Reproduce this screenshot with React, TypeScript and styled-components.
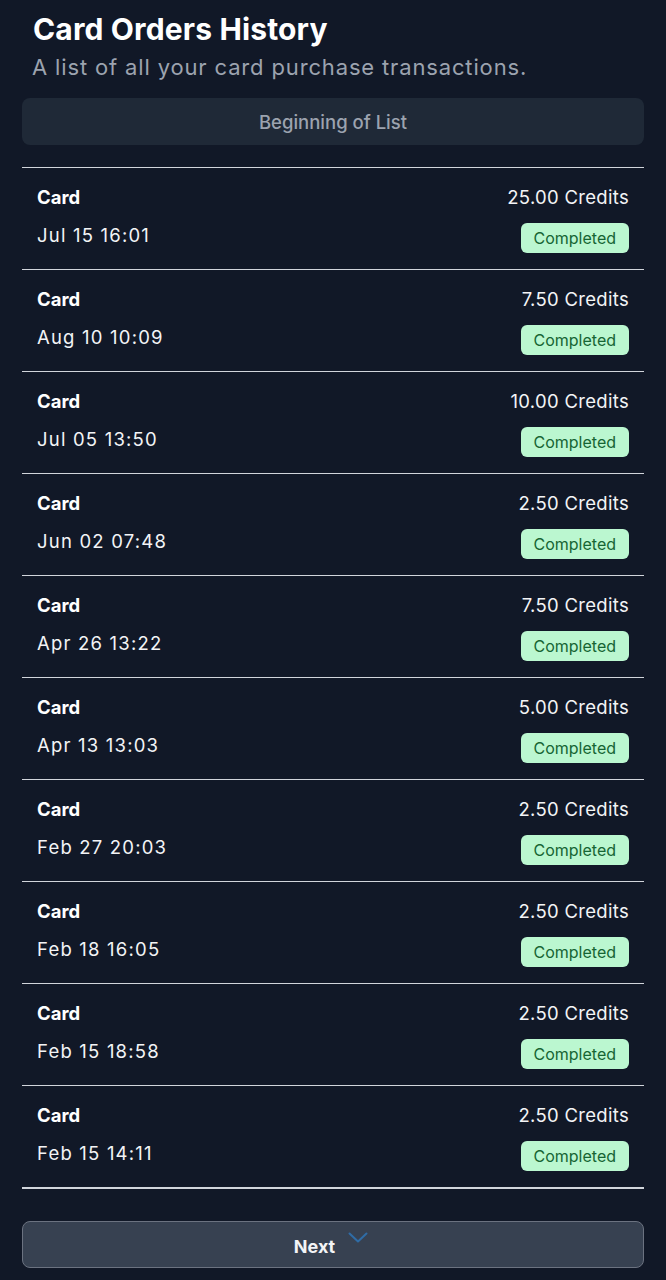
import React from 'react';
import styled, { createGlobalStyle } from 'styled-components';

const GlobalStyle = createGlobalStyle`
  html, body {
    margin: 0;
    padding: 0;
    background: #111827;
  }
  body {
    font-family: Inter, "Noto Sans", sans-serif;
    color: #f9fafb;
  }
`;

const Page = styled.div`
  display: flex;
  flex-direction: column;
  padding: 10px 22px 11px;
  min-height: 1280px;
  box-sizing: border-box;
  background: #111827;
`;

const Header = styled.div`
  display: flex;
  flex-direction: column;
  padding: 0 11px;
`;

const Title = styled.h1`
  margin: 0;
  font-size: 30px;
  line-height: 38px;
  font-weight: 700;
  letter-spacing: 0.15px;
  color: #ffffff;
`;

const Subtitle = styled.p`
  margin: 4px 0 0 -1px;
  font-size: 22px;
  line-height: 30px;
  letter-spacing: 0.85px;
  color: #9ca3af;
`;

const Banner = styled.div`
  margin-top: 16px;
  height: 47px;
  border-radius: 8px;
  background: #1f2937;
  color: #9ca3af;
  font-size: 18.5px;
  font-weight: 500;
  display: flex;
  align-items: center;
  justify-content: center;
`;

const List = styled.div`
  margin-top: 22px;
  display: flex;
  flex-direction: column;
  border-top: 1px solid #d1d5db;
  border-bottom: 2px solid #d1d5db;
`;

const Row = styled.div`
  display: grid;
  grid-template-columns: 1fr auto;
  grid-template-rows: 24px 30px;
  row-gap: 14px;
  align-items: center;
  padding: 17px 15px 16px 15px;
  & + & {
    border-top: 1px solid #d1d5db;
  }
`;

const Kind = styled.span`
  font-size: 18.5px;
  font-weight: 700;
  color: #ffffff;
`;

const Amount = styled.span`
  font-size: 18.5px;
  color: #f3f4f6;
  justify-self: end;
  letter-spacing: 0.3px;
`;

const DateText = styled.span`
  font-size: 18.5px;
  color: #f3f4f6;
  letter-spacing: 1.2px;
  margin-bottom: 6px;
`;

const Badge = styled.span`
  justify-self: end;
  height: 30px;
  padding: 0 13px;
  border-radius: 6px;
  background: #bbf7d0;
  color: #166534;
  font-size: 16px;
  font-weight: 400;
  display: flex;
  align-items: center;
`;

const NextButton = styled.button`
  margin-top: 32px;
  height: 47px;
  width: 100%;
  border-radius: 8px;
  border: 1px solid #6b7280;
  background: #374151;
  color: #f3f4f6;
  font-family: Inter, "Noto Sans", sans-serif;
  font-size: 18px;
  font-weight: 700;
  display: flex;
  align-items: center;
  justify-content: center;
  gap: 13px;
  padding: 0 4px 0 0;
  cursor: pointer;
`;

const ButtonLabel = styled.span`
  padding-top: 4px;
`;

const Chevron = styled.svg`
  width: 20px;
  height: 11px;
  margin-bottom: 14px;
`;

const orders = [
  { amount: '25.00', date: 'Jul 15 16:01' },
  { amount: '7.50', date: 'Aug 10 10:09' },
  { amount: '10.00', date: 'Jul 05 13:50' },
  { amount: '2.50', date: 'Jun 02 07:48' },
  { amount: '7.50', date: 'Apr 26 13:22' },
  { amount: '5.00', date: 'Apr 13 13:03' },
  { amount: '2.50', date: 'Feb 27 20:03' },
  { amount: '2.50', date: 'Feb 18 16:05' },
  { amount: '2.50', date: 'Feb 15 18:58' },
  { amount: '2.50', date: 'Feb 15 14:11' },
];

const App: React.FC = () => {
  return (
    <>
      <GlobalStyle />
      <Page>
        <Header>
          <Title>Card Orders History</Title>
          <Subtitle>A list of all your card purchase transactions.</Subtitle>
        </Header>
        <Banner>Beginning of List</Banner>
        <List>
          {orders.map((order, index) => (
            <Row key={index}>
              <Kind>Card</Kind>
              <Amount>{order.amount} Credits</Amount>
              <DateText>{order.date}</DateText>
              <Badge>Completed</Badge>
            </Row>
          ))}
        </List>
        <NextButton>
          <ButtonLabel>Next</ButtonLabel>
          <Chevron viewBox="0 0 20 11" fill="none" stroke="#2f6ca6" strokeWidth="2" strokeLinecap="round" strokeLinejoin="round">
            <path d="M1.5 1.5L10 9.5L18.5 1.5" />
          </Chevron>
        </NextButton>
      </Page>
    </>
  );
};

export default App;
